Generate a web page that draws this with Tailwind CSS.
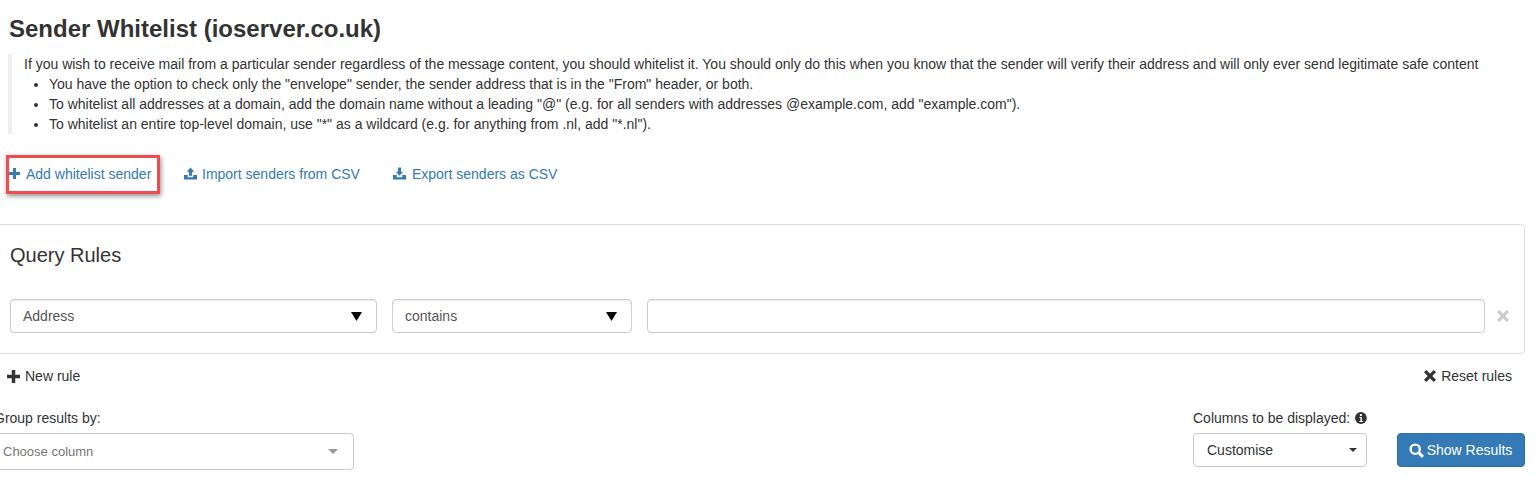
<!DOCTYPE html>
<html lang="en">
<head>
  <meta charset="UTF-8" />
  <title>Sender Whitelist</title>
  <script src="https://cdn.jsdelivr.net/npm/@tailwindcss/browser@4"></script>
</head>
<body class="bg-white font-['Liberation_Sans',Arial,sans-serif] text-[14px] leading-5 text-[#333] h-[477px] overflow-hidden">
  <div class="pl-[9px] pt-[15px]">
    <h1 class="text-[24px] leading-[28px] font-bold">Sender Whitelist (ioserver.co.uk)</h1>
    <div class="-ml-[1px] mt-[11px] border-l-4 border-[#eee] pl-3 h-[80px]">
      <p>If you wish to receive mail from a particular sender regardless of the message content, you should whitelist it. You should only do this when you know that the sender will verify their address and will only ever send legitimate safe content</p>
      <ul class="list-disc pl-[25px]">
        <li>You have the option to check only the "envelope" sender, the sender address that is in the "From" header, or both.</li>
        <li>To whitelist all addresses at a domain, add the domain name without a leading "@" (e.g. for all senders with addresses @example.com, add "example.com").</li>
        <li>To whitelist an entire top-level domain, use "*" as a wildcard (e.g. for anything from .nl, add "*.nl").</li>
      </ul>
    </div>
  </div>

  <div class="flex items-center h-[39px] mt-[20px] text-[#337ab7]">
    <a class="relative flex items-center ml-[9px] w-[143px]">
      <span class="absolute -left-[3px] -top-[9px] w-[154px] h-[39px] border-[3px] border-[#f04b4f] shadow-[1px_2px_5px_rgba(0,0,0,0.45)]"></span>
      <svg class="w-[11px] h-[11px] mr-[6px]" viewBox="0 0 12 12" fill="currentColor"><path d="M4.4 0h3.2v4.4H12v3.200H7.600V12H4.400V7.600H0V4.400h4.400z"/></svg>
      Add whitelist sender
    </a>
    <a class="flex items-center ml-[32px]">
      <svg class="w-[13px] h-[13px] mr-[5px]" viewBox="0 0 14 13" fill="currentColor"><path d="M7 0l4 4.500H8.600V9H5.400V4.500H3zM0 8h4v2.500h6V8h4v5H0z"/></svg>
      Import senders from CSV
    </a>
    <a class="flex items-center ml-[33px]">
      <svg class="w-[13px] h-[13px] mr-[6px]" viewBox="0 0 14 13" fill="currentColor"><path d="M5.400 0h3.200v4.500H11L7 9 3 4.500h2.400zM0 8h4v2.500h6V8h4v5H0z"/></svg>
      Export senders as CSV
    </a>
  </div>

  <div class="-ml-[4px] mt-[31px] w-[1529px] h-[130px] border border-[#ddd] rounded-[4px] pl-[13px] pr-[39px] bg-white">
    <h3 class="text-[20px] leading-[22px] pt-[19px]">Query Rules</h3>
    <div class="flex items-center gap-[15px] mt-[33px]">
      <div class="w-[367px] h-[34px] border border-[#ccc] rounded-[4px] flex items-center justify-between pl-3 pr-[15px] text-[#555] shadow-[inset_0_1px_1px_rgba(0,0,0,0.075)]">
        Address
        <svg class="w-[11px] h-[9px] translate-x-[1px]" viewBox="0 0 11 9" fill="#000"><path d="M0 0h11L5.500 9z"/></svg>
      </div>
      <div class="w-[240px] h-[34px] border border-[#ccc] rounded-[4px] flex items-center justify-between pl-3 pr-[15px] text-[#555] shadow-[inset_0_1px_1px_rgba(0,0,0,0.075)]">
        contains
        <svg class="w-[11px] h-[9px] translate-x-[1px]" viewBox="0 0 11 9" fill="#000"><path d="M0 0h11L5.500 9z"/></svg>
      </div>
      <div class="flex-1 h-[34px] border border-[#ccc] rounded-[4px] shadow-[inset_0_1px_1px_rgba(0,0,0,0.075)]"></div>
      <svg class="absolute left-[1497px] top-[310px] w-[12px] h-[12px]" viewBox="0 0 12 12" fill="#ccc"><path d="M2.300 0L6 3.700 9.700 0 12 2.300 8.300 6 12 9.700 9.700 12 6 8.300 2.300 12 0 9.700 3.700 6 0 2.300z"/></svg>
    </div>
  </div>

  <div class="flex items-center justify-between h-[20px] mt-[12px] pl-[7px] pr-[25px]">
    <a class="flex items-center">
      <svg class="w-[13px] h-[13px] mr-[5px]" viewBox="0 0 12 12" fill="currentColor"><path d="M4.400 0h3.200v4.400H12v3.200H7.600V12H4.400V7.600H0V4.400h4.400z"/></svg>
      New rule
    </a>
    <a class="flex items-center">
      <svg class="w-[12px] h-[12px] mr-[5px]" viewBox="0 0 12 12" fill="currentColor"><path d="M2.300 0L6 3.700 9.700 0 12 2.300 8.300 6 12 9.700 9.700 12 6 8.300 2.300 12 0 9.700 3.700 6 0 2.300z"/></svg>
      Reset rules
    </a>
  </div>

  <div class="flex justify-between mt-[22px] pr-[12px]">
    <div class="-ml-[6px]">
      <label class="block h-[20px]">Group results by:</label>
      <div class="-ml-[6px] mt-[5px] w-[366px] h-[37px] border border-[#ccc] rounded-[4px] flex items-center justify-between pl-[14px] pr-[15px] text-[13px] text-[#777]">
        Choose column
        <svg class="w-[10px] h-[5px]" viewBox="0 0 12 6" fill="#999"><path d="M0 0h12L6 6z"/></svg>
      </div>
    </div>
    <div class="flex items-start gap-[30px]">
      <div class="w-[174px]">
        <label class="flex items-center h-[20px] whitespace-nowrap">
          Columns to be displayed:
          <svg class="w-[12px] h-[12px] ml-[5px]" viewBox="0 0 12 12"><circle cx="6" cy="6" r="6" fill="#333"/><rect x="5" y="2" width="2" height="2" fill="#fff"/><path d="M4.500 5H7v4h1v1H4.500V9h1V6h-1z" fill="#fff"/></svg>
        </label>
        <div class="mt-[5px] h-[34px] border border-[#ccc] rounded-[4px] flex items-center justify-between pl-[13px] pr-[9px]">
          Customise
          <svg class="w-[8px] h-[4px]" viewBox="0 0 8 4" fill="#333"><path d="M0 0h8L4 4z"/></svg>
        </div>
      </div>
      <button class="w-[128px] h-[34px] mt-[25px] bg-[#337ab7] border border-[#2e6da4] rounded-[4px] text-white flex items-center justify-center">
        <svg class="w-[15px] h-[15px] mr-[3px] -ml-[1px]" viewBox="0 0 14 14" fill="none" stroke="#fff"><circle cx="5.800" cy="5.800" r="4.300" stroke-width="2.200"/><path d="M9 9l4 4" stroke-width="2.800"/></svg>
        Show Results
      </button>
    </div>
  </div>
</body>
</html>
